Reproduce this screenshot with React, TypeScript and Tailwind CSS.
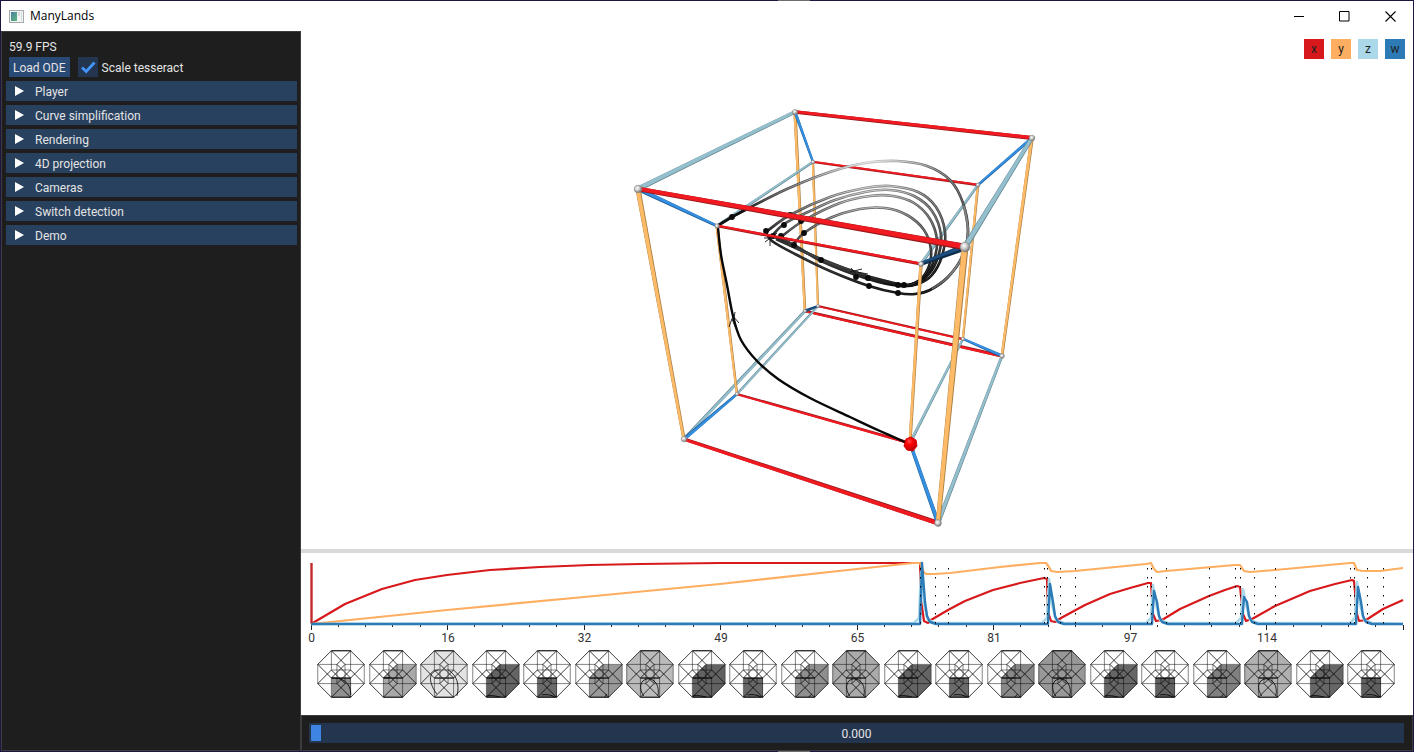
import { useState } from "react";

type Point = [number, number];

const COLORS = { x: "#f01a20", y: "#fdbb68", z: "#94bfcd", w: "#3590e2" };
const SHADES = { x: "#94181b", y: "#a87c42", z: "#5d7f8b", w: "#1d5a94" };
type Axis = keyof typeof COLORS;

const NODES: Record<string, { at: Point; r: number }> = {
  A: { at: [795, 112], r: 2.6 },
  B: { at: [1032, 138], r: 2.8 },
  C: { at: [638, 189], r: 3.8 },
  D: { at: [965, 247], r: 5 },
  a: { at: [813, 162], r: 1.8 },
  b: { at: [978, 185], r: 2 },
  c: { at: [717, 226], r: 2.2 },
  d: { at: [921, 264], r: 2.6 },
  A1: { at: [805, 311], r: 1.6 },
  B1: { at: [1002, 356], r: 2.4 },
  C1: { at: [684, 439], r: 2.8 },
  D1: { at: [938, 523], r: 3.4 },
  a1: { at: [818, 306], r: 1.6 },
  b1: { at: [963, 339], r: 1.8 },
  c1: { at: [737, 394], r: 1.8 },
  d1: { at: [910, 443], r: 2 },
};

type Edge = [string, string, Axis, number, number];

const BACK_EDGES: Edge[] = [
  ["a1", "b1", "x", 1.8, 2],
  ["A1", "B1", "x", 2.4, 3],
  ["A", "A1", "y", 3.2, 2.6],
  ["a", "a1", "y", 2.4, 2],
  ["b", "b1", "y", 2.6, 2.2],
  ["B", "B1", "y", 3.6, 2.8],
  ["A1", "C1", "z", 2.6, 3.2],
  ["a1", "c1", "z", 2, 2.4],
  ["b1", "d1", "z", 2.2, 3],
  ["b1", "B1", "w", 2.2, 3],
  ["A", "a", "w", 3, 2.2],
  ["B", "b", "w", 3, 2.4],
  ["A", "B", "x", 3.4, 4],
  ["a", "b", "x", 2.2, 2.4],
  ["A", "C", "z", 3.6, 5.2],
  ["a", "c", "z", 2.2, 2.8],
  ["b", "d", "z", 2.4, 3],
  ["c", "c1", "y", 3, 2.4],
  ["c1", "d1", "x", 2.2, 2.8],
];

const FRONT_EDGES: Edge[] = [
  ["c", "d", "x", 2.6, 3],
  ["C", "c", "w", 4.2, 2.6],
  ["C", "C1", "y", 5, 3.2],
  ["C1", "c1", "w", 3.4, 2.4],
  ["C1", "D1", "x", 3.4, 4.8],
  ["d", "d1", "y", 3.4, 3],
  ["B", "D", "z", 4, 6],
  ["B1", "D1", "z", 2.8, 4.2],
  ["d1", "D1", "w", 3.4, 4],
  ["D", "D1", "y", 7, 4.6],
  ["C", "D", "x", 4.6, 6.6],
];

function taper(p: Point, q: Point, w1: number, w2: number, dx = 0, dy = 0) {
  const len = Math.hypot(q[0] - p[0], q[1] - p[1]);
  const nx = -(q[1] - p[1]) / len / 2;
  const ny = (q[0] - p[0]) / len / 2;
  return [
    [p[0] + nx * w1 + dx, p[1] + ny * w1 + dy],
    [q[0] + nx * w2 + dx, q[1] + ny * w2 + dy],
    [q[0] - nx * w2 + dx, q[1] - ny * w2 + dy],
    [p[0] - nx * w1 + dx, p[1] - ny * w1 + dy],
  ]
    .map((v) => v.map((n) => n.toFixed(1)).join(","))
    .join(" ");
}

function smooth(pts: Point[]) {
  let d = `M${pts[0][0]} ${pts[0][1]}`;
  for (let i = 0; i < pts.length - 1; i++) {
    const p0 = pts[Math.max(0, i - 1)];
    const p1 = pts[i];
    const p2 = pts[i + 1];
    const p3 = pts[Math.min(pts.length - 1, i + 2)];
    const c1 = [p1[0] + (p2[0] - p0[0]) / 6, p1[1] + (p2[1] - p0[1]) / 6];
    const c2 = [p2[0] - (p3[0] - p1[0]) / 6, p2[1] - (p3[1] - p1[1]) / 6];
    d += `C${c1[0].toFixed(1)} ${c1[1].toFixed(1)} ${c2[0].toFixed(1)} ${c2[1].toFixed(1)} ${p2[0]} ${p2[1]}`;
  }
  return d;
}

function Edges({ list }: { list: Edge[] }) {
  return (
    <>
      {list.map(([from, to, axis, w1, w2]) => {
        const p = NODES[from].at;
        const q = NODES[to].at;
        const vertical = axis === "y";
        const litBelow = from === "C1" || from === "A1" || from === "c1" || from === "a1";
        return (
          <g key={from + to}>
            <polygon points={taper(p, q, w1, w2)} fill={SHADES[axis]} />
            <polygon
              points={taper(p, q, w1 * 0.78, w2 * 0.78, vertical ? -0.3 : 0, vertical ? 0 : litBelow ? 0.4 : -0.4)}
              fill={COLORS[axis]}
            />
          </g>
        );
      })}
    </>
  );
}

const LOOPS: Point[][] = [
  [[717, 226], [732, 217], [749, 208], [787, 189], [830, 172], [865, 163], [897, 161], [927, 166], [950, 180], [963, 203], [968, 232], [962, 257], [948, 277], [930, 290], [915, 294], [898, 293], [869, 286], [830, 271], [795, 254], [772, 241], [766, 232]],
  [[766, 232], [790, 215], [830, 197], [865, 188], [890, 186], [918, 192], [936, 207], [945, 232], [942, 256], [932, 275], [918, 284], [900, 286], [868, 279], [821, 261], [794, 245], [772, 236]],
  [[772, 236], [784, 224], [808, 212], [835, 200], [865, 192], [890, 190], [914, 196], [932, 211], [941, 235], [938, 257], [929, 274], [916, 284], [898, 285], [868, 278], [821, 260], [781, 238]],
  [[781, 237], [803, 221], [840, 203], [870, 196], [893, 196], [914, 203], [930, 219], [937, 240], [934, 260], [926, 275], [912, 284], [894, 284], [866, 276], [821, 259], [776, 239]],
  [[794, 244], [804, 233], [830, 218], [860, 209], [885, 208], [907, 215], [924, 230], [931, 250], [929, 266], [921, 279], [908, 285], [890, 282], [864, 275], [825, 261], [785, 243]],
];

const OUTER_RETURN: Point[] = [[964, 206], [968, 232], [962, 257], [948, 277], [932, 289]];
const LEAD_IN: Point[] = [[718, 228], [721, 255], [727, 285], [733, 316], [741, 340], [757, 361], [778, 379], [810, 398], [850, 417], [880, 431], [907, 443]];

const SWITCH_POINTS: Point[] = [
  [732, 217], [766, 231], [773, 236], [790, 215], [784, 225], [781, 236], [801, 221], [804, 233], [794, 245],
  [821, 260], [856, 277], [868, 278], [869, 286], [898, 285], [904, 285], [898, 293],
];

function Scene() {
  return (
    <svg viewBox="301 31 1112 518" className="h-full w-full" role="img" aria-label="Tesseract">
      <defs>
        <radialGradient id="fog" gradientUnits="userSpaceOnUse" cx="868" cy="148" r="162">
          <stop offset="0" stopColor="#e4e4e4" />
          <stop offset="0.12" stopColor="#b8b8b8" />
          <stop offset="0.28" stopColor="#808080" />
          <stop offset="0.45" stopColor="#5a5a5a" />
          <stop offset="0.7" stopColor="#444444" />
          <stop offset="0.86" stopColor="#0c0c0c" />
        </radialGradient>
        <radialGradient id="fogLight" gradientUnits="userSpaceOnUse" cx="868" cy="148" r="162">
          <stop offset="0" stopColor="#ffffff" />
          <stop offset="0.3" stopColor="#dadada" />
          <stop offset="0.6" stopColor="#8a8a8a" />
          <stop offset="0.82" stopColor="#303030" />
        </radialGradient>
        <linearGradient id="return" gradientUnits="userSpaceOnUse" x1="0" y1="206" x2="0" y2="290">
          <stop offset="0" stopColor="#6a6a6a" />
          <stop offset="0.8" stopColor="#6a6a6a" />
          <stop offset="1" stopColor="#333333" />
        </linearGradient>
        <radialGradient id="ball" cx="0.4" cy="0.38" r="0.6">
          <stop offset="0" stopColor="#ffffff" />
          <stop offset="0.5" stopColor="#cccccc" />
          <stop offset="1" stopColor="#777777" />
        </radialGradient>
        <radialGradient id="redBall" cx="0.4" cy="0.3" r="0.7">
          <stop offset="0" stopColor="#ff5050" />
          <stop offset="0.35" stopColor="#ff0505" />
          <stop offset="1" stopColor="#b80000" />
        </radialGradient>
      </defs>
      <Edges list={BACK_EDGES} />
      <polygon points={taper([805, 311], [818, 306], 3, 2.4)} fill="#174a7a" />
      {LOOPS.map((pts, i) => (
        <g key={i} fill="none">
          <path d={smooth(pts)} stroke="url(#fog)" strokeWidth="2.6" />
          <path d={smooth(pts)} stroke="url(#fogLight)" strokeWidth="0.8" />
        </g>
      ))}
      <path d={smooth(OUTER_RETURN)} fill="none" stroke="url(#return)" strokeWidth="2.6" />
      <path d={smooth(OUTER_RETURN)} fill="none" stroke="#999" strokeWidth="0.7" />
      <path d={smooth(LEAD_IN)} fill="none" stroke="#080808" strokeWidth="2.4" />
      <path d="M717 226L732 217L749 208" fill="none" stroke="#111" strokeWidth="2" />
      <path d="M729 327L733 316L739 323M732 319L736 329M735 312L734 318M765 242L777 233M770 234V246M774 238L764 238M850 272L862 269M851 268L858 276M857 272L868 274" fill="none" stroke="#111" strokeWidth="0.9" />
      {SWITCH_POINTS.map(([x, y]) => (
        <circle key={`${x}-${y}`} cx={x} cy={y} r="2.9" fill="#0b0b0b" />
      ))}
      <polygon points={taper([965, 247], [921, 264], 7, 3.6)} fill="#0f2c49" />
      <polygon points={taper([965, 246], [921, 263], 4, 2)} fill="#1c4f80" />
      <Edges list={FRONT_EDGES} />
      {Object.entries(NODES).map(([name, { at, r }]) => (
        <circle key={name} cx={at[0]} cy={at[1]} r={r} fill="url(#ball)" stroke="#8a8a8a" strokeWidth="0.6" />
      ))}
      <polygon points="906,439 911,437 916,440 917,446 913,451 907,450 904,446" fill="url(#redBall)" stroke="#d80000" strokeWidth="1" />
    </svg>
  );
}

const RED: Point[] = [
  [311, 624], [345, 604], [382, 589], [415, 580], [447, 575], [490, 570], [540, 567], [590, 565], [640, 564], [720, 563], [915, 563], [920, 563],
  [921, 600], [924, 621], [928, 623], [931, 620], [948, 610], [965, 601], [993, 590], [1020, 583], [1044, 578], [1047, 579],
  [1048, 612], [1051, 621], [1055, 622], [1061, 618], [1085, 605], [1110, 594], [1130, 588], [1148, 583], [1151, 583],
  [1153, 614], [1156, 621], [1162, 620], [1180, 609], [1209, 596], [1225, 590], [1237, 586], [1240, 587],
  [1243, 614], [1246, 621], [1252, 619], [1275, 606], [1310, 591], [1335, 584], [1352, 580], [1354, 581],
  [1357, 614], [1359, 621], [1366, 620], [1383, 609], [1403, 600],
];

const ORANGE: Point[] = [
  [311, 624], [447, 610], [584, 597], [720, 584], [857, 569], [913, 563], [920, 563], [923, 571], [926, 574], [935, 574], [950, 573], [1000, 567],
  [1040, 563], [1046, 563], [1049, 567], [1051, 571], [1057, 572], [1075, 571], [1146, 564], [1151, 563], [1154, 569],
  [1157, 572], [1166, 571], [1235, 565], [1240, 565], [1244, 571], [1250, 572], [1275, 570], [1350, 563], [1354, 563],
  [1357, 570], [1363, 571], [1380, 571], [1403, 568],
];

const SPIKES = [
  { x: 922, w: 563, z: 572 },
  { x: 1050, w: 584, z: 579 },
  { x: 1154, w: 591, z: 585 },
  { x: 1244, w: 597, z: 589 },
  { x: 1358, w: 587, z: 582 },
];

const SWITCH_LINES = [920, 935, 948, 1044, 1047, 1060, 1075, 1147, 1151, 1166, 1209, 1235, 1240, 1254, 1275, 1350, 1354, 1367, 1383];
const LABELS = ["0", "16", "32", "49", "65", "81", "97", "114"];

const polyline = (pts: Point[]) => pts.map((p) => p.join(",")).join(" ");

function Chart() {
  const ticks = Array.from({ length: 41 }, (_, i) => 311 + i * 27.3);
  const zLine = SPIKES.map(({ x, z }) => `L${x - 8} 623L${x - 3} 618L${x - 1} ${z}L${x + 2} 604L${x + 6} 620L${x + 14} 623`).join("");
  const wLine = SPIKES.map(({ x, w }) => `L${x - 2} 624L${x} ${w}L${x + 3} 602L${x + 5} 616L${x + 8} 622L${x + 14} 624`).join("");
  return (
    <svg viewBox="301 553 1112 95" className="block w-full" role="img" aria-label="State variables over time">
      {ticks.map((x, i) => (
        <rect key={i} x={Math.floor(x)} y="625" width="1" height={i % 5 === 0 ? 5 : 2} fill="#222" />
      ))}
      <g fill="none" strokeLinejoin="round">
        <polyline points={polyline(RED)} stroke="#d7191c" strokeWidth="2.2" />
        <polyline points={polyline(ORANGE)} stroke="#fdae61" strokeWidth="2.2" />
        <path d={`M311 624${zLine}L1403 624`} stroke="#abd9e9" strokeWidth="2.6" />
        <path d={`M311 624${wLine}L1403 624`} stroke="#2c7bb6" strokeWidth="2.4" />
        <path d="M311.500 563V623" stroke="#c22a2d" strokeWidth="2.4" />
        {SWITCH_LINES.map((x) => (
          <path key={x} d={`M${x + 0.5} 568V625`} stroke="#000" strokeDasharray="1.5 7.5" />
        ))}
      </g>
      {LABELS.map((label, i) => (
        <text key={label} x={311.5 + i * 136.5} y="642" textAnchor="middle" fill="#333" fontFamily="Roboto, sans-serif" fontSize="12">
          {label}
        </text>
      ))}
    </svg>
  );
}

type Kind = "face" | "cell" | "full";

const SHAPES: Record<Kind, string> = {
  face: "14,27 33,27 33,46 14,46",
  cell: "14,27 27,14 46,14 46,33 33,46 14,46",
  full: "14,0 33,0 46,14 46,33 33,46 14,46 0,33 0,14",
};

const PATHS: Record<Kind, string> = {
  face: "M18 44C22 43 28 44 31 46",
  cell: "M14 45C19 44 23 45 27 46",
  full: "M17 45C12 38 13 29 21 28C29 28 33 36 31 45",
};

const GLYPHS: { kind: Kind; fill: string; path?: string }[] = [
  { kind: "face", fill: "#8f8f8f", path: "M14 27C24 27 33 31 33 44" },
  { kind: "cell", fill: "#a8a8a8", path: "M14 27H20" },
  { kind: "full", fill: "#e3e3e3", path: "M16 43C9 33 6 22 18 19M27 19C36 24 39 34 36 45" },
  { kind: "cell", fill: "#646464" },
  { kind: "face", fill: "#6a6a6a" },
  { kind: "cell", fill: "#999999", path: "M29 46L31 43" },
  { kind: "full", fill: "#bbbbbb" },
  { kind: "cell", fill: "#626262" },
  { kind: "face", fill: "#686868" },
  { kind: "cell", fill: "#8e8e8e", path: "M27 46L30 43" },
  { kind: "full", fill: "#aaaaaa" },
  { kind: "cell", fill: "#646464" },
  { kind: "face", fill: "#6a6a6a" },
  { kind: "cell", fill: "#888888", path: "M27 46L30 43" },
  { kind: "full", fill: "#989898" },
  { kind: "cell", fill: "#666666" },
  { kind: "face", fill: "#606060" },
  { kind: "cell", fill: "#808080", path: "M27 46L30 43" },
  { kind: "full", fill: "#b0b0b0" },
  { kind: "cell", fill: "#666666" },
  { kind: "face", fill: "#606060" },
];

const STEPS: Point[] = [[19, 0], [13.5, 13.5], [0, 19], [13.5, -13.5]];

const WIRES = STEPS.flatMap(([dx, dy], axis) =>
  Array.from({ length: 16 }, (_, mask) => mask)
    .filter((mask) => !(mask & (1 << axis)))
    .map((mask) => {
      let x = 0.25;
      let y = 13.75;
      STEPS.forEach(([sx, sy], bit) => {
        if (mask & (1 << bit)) {
          x += sx;
          y += sy;
        }
      });
      return { d: `M${x} ${y}l${dx} ${dy}`, diagonal: dx * dy !== 0 };
    }),
);
const DIAGONALS = WIRES.filter((w) => w.diagonal).map((w) => w.d).join("");
const STRAIGHTS = WIRES.filter((w) => !w.diagonal).map((w) => w.d).join("");

function Glyphs() {
  return (
    <div className="flex justify-between pl-4 pr-[18px] pt-[2px]">
      {GLYPHS.map(({ kind, fill, path }, i) => (
        <svg key={i} viewBox="-0.5 -0.5 47.5 47.5" className="w-12 min-w-0 shrink" aria-hidden="true">
          <polygon points={SHAPES[kind]} fill={fill} />
          <path d={DIAGONALS} fill="none" stroke="#000" strokeOpacity="0.85" strokeWidth="0.9" />
          <path d={STRAIGHTS} fill="none" stroke="#000" strokeOpacity="0.6" strokeWidth="0.8" />
          <path d="M14 0.250H33M14 27.250H33M14 46.250H33" stroke="#000" strokeWidth="0.9" />
          <path d={path ?? PATHS[kind]} fill="none" stroke="#000" strokeWidth="0.8" />
        </svg>
      ))}
    </div>
  );
}

const SECTIONS = ["Player", "Curve simplification", "Rendering", "4D projection", "Cameras", "Switch detection", "Demo"];

function Sidebar() {
  return (
    <aside className="flex w-[300px] shrink-0 flex-col border border-[#3c3c3f] bg-[#1e1e1e] pl-1 pr-[3px] pt-[5px] text-[#e4e4e4]">
      <p className="px-[3px] pt-[2px] leading-4">59.9 FPS</p>
      <div className="flex items-center gap-2 px-[3px] py-[2px]">
        <button type="button" className="h-5 bg-[#294a75] px-1 pt-px">
          Load ODE
        </button>
        <label className="flex items-center gap-1">
          <span className="relative flex">
            <input type="checkbox" defaultChecked className="peer size-5 appearance-none bg-[#24354f]" />
            <svg viewBox="0 0 20 20" className="pointer-events-none absolute inset-0 hidden size-5 peer-checked:block" aria-hidden="true">
              <path d="M4 10.500L8.200 14.500L16.500 5.500" fill="none" stroke="#4296fa" strokeWidth="2.800" />
            </svg>
          </span>
          <span className="pt-px">Scale tesseract</span>
        </label>
      </div>
      <nav className="flex flex-col gap-1 pt-[2px]">
        {SECTIONS.map((name) => (
          <button key={name} type="button" className="flex h-5 items-center gap-[11px] bg-[#28415f] pl-[9px] text-left">
            <svg viewBox="0 0 9 10" className="h-[10px] w-[9px]" aria-hidden="true">
              <path d="M0 0L9 5L0 10Z" fill="#fff" />
            </svg>
            <span className="pt-px">{name}</span>
          </button>
        ))}
      </nav>
    </aside>
  );
}

function TitleBar() {
  return (
    <header className="flex h-[30px] shrink-0 items-center bg-white">
      <svg viewBox="0 0 15 13" className="ml-2 h-[13px] w-[15px]" aria-hidden="true">
        <defs>
          <linearGradient id="app" x1="0" y1="0" x2="1" y2="1">
            <stop offset="0" stopColor="#4a7fa0" />
            <stop offset="1" stopColor="#5db87e" />
          </linearGradient>
        </defs>
        <rect x="0.500" y="0.500" width="14" height="12" fill="#f4f6f6" stroke="#a5a9ab" />
        <rect x="2" y="2" width="6" height="9" fill="url(#app)" />
        <rect x="9" y="2" width="2" height="4" fill="#d5dadb" />
        <rect x="12" y="2" width="1" height="9" fill="#d5dadb" />
      </svg>
      <h1 className="ml-[6px] grow font-['Open_Sans',sans-serif] text-xs text-black">ManyLands</h1>
      <button type="button" aria-label="Minimize" className="flex h-full w-[46px] items-center justify-center">
        <svg viewBox="0 0 11 11" className="size-[11px]"><path d="M0 5.500H10" stroke="#000" /></svg>
      </button>
      <button type="button" aria-label="Maximize" className="flex h-full w-[45px] items-center justify-center">
        <svg viewBox="0 0 11 11" className="size-[11px]"><path d="M0.500 0.500H10V10H0.500Z" fill="none" stroke="#000" /></svg>
      </button>
      <button type="button" aria-label="Close" className="flex h-full w-[46px] items-center justify-center">
        <svg viewBox="0 0 11 11" className="size-[11px]"><path d="M0.500 0.500L10.500 10.500M10.500 0.500L0.500 10.500" stroke="#000" strokeWidth="1.100" /></svg>
      </button>
    </header>
  );
}

const LEGEND = [
  { name: "x", style: "bg-[#d7191c]" },
  { name: "y", style: "bg-[#fdae61]" },
  { name: "z", style: "bg-[#abd9e9]" },
  { name: "w", style: "bg-[#2c7bb6]" },
];

export default function App() {
  const [time, setTime] = useState(0);
  return (
    <div className="flex h-screen flex-col border-x border-[#1b1642] bg-white font-[Roboto,sans-serif] text-xs">
      <div className="h-px shrink-0 bg-[#1b1642]">
        <div className="ml-[55%] h-px w-8 bg-[#6d6d6d]" />
      </div>
      <TitleBar />
      <div className="flex min-h-0 grow">
        <Sidebar />
        <main className="flex min-w-0 grow flex-col">
          <section className="relative min-h-0 grow">
            <Scene />
            <div className="absolute right-2 top-2 flex gap-[7px]">
              {LEGEND.map(({ name, style }) => (
                <button key={name} type="button" className={`size-5 text-[#222] ${style}`}>
                  {name}
                </button>
              ))}
            </div>
          </section>
          <div className="h-1 shrink-0 bg-[#d9d9d9]" />
          <section className="shrink-0 pb-[17px]">
            <Chart />
            <Glyphs />
          </section>
          <footer className="shrink-0 border border-[#3c3c3f] bg-[#1e1e1e] py-[7px] pl-[7px] pr-2">
            <div className="relative h-5">
              <input
                type="range"
                aria-label="Time"
                min={0}
                max={130}
                step={0.001}
                value={time}
                onChange={(e) => setTime(Number(e.target.value))}
                className="block h-5 w-full appearance-none bg-[#24354f] px-[2px] [&::-webkit-slider-thumb]:h-4 [&::-webkit-slider-thumb]:w-[10px] [&::-webkit-slider-thumb]:appearance-none [&::-webkit-slider-thumb]:bg-[#3d85e0]"
              />
              <output className="pointer-events-none absolute inset-0 text-center leading-[22px] text-[#e4e4e4]">{time.toFixed(3)}</output>
            </div>
          </footer>
        </main>
      </div>
      <div className="h-px shrink-0 bg-[#1b1642]">
        <div className="ml-[55%] h-px w-8 bg-[#6d6d6d]" />
      </div>
    </div>
  );
}
